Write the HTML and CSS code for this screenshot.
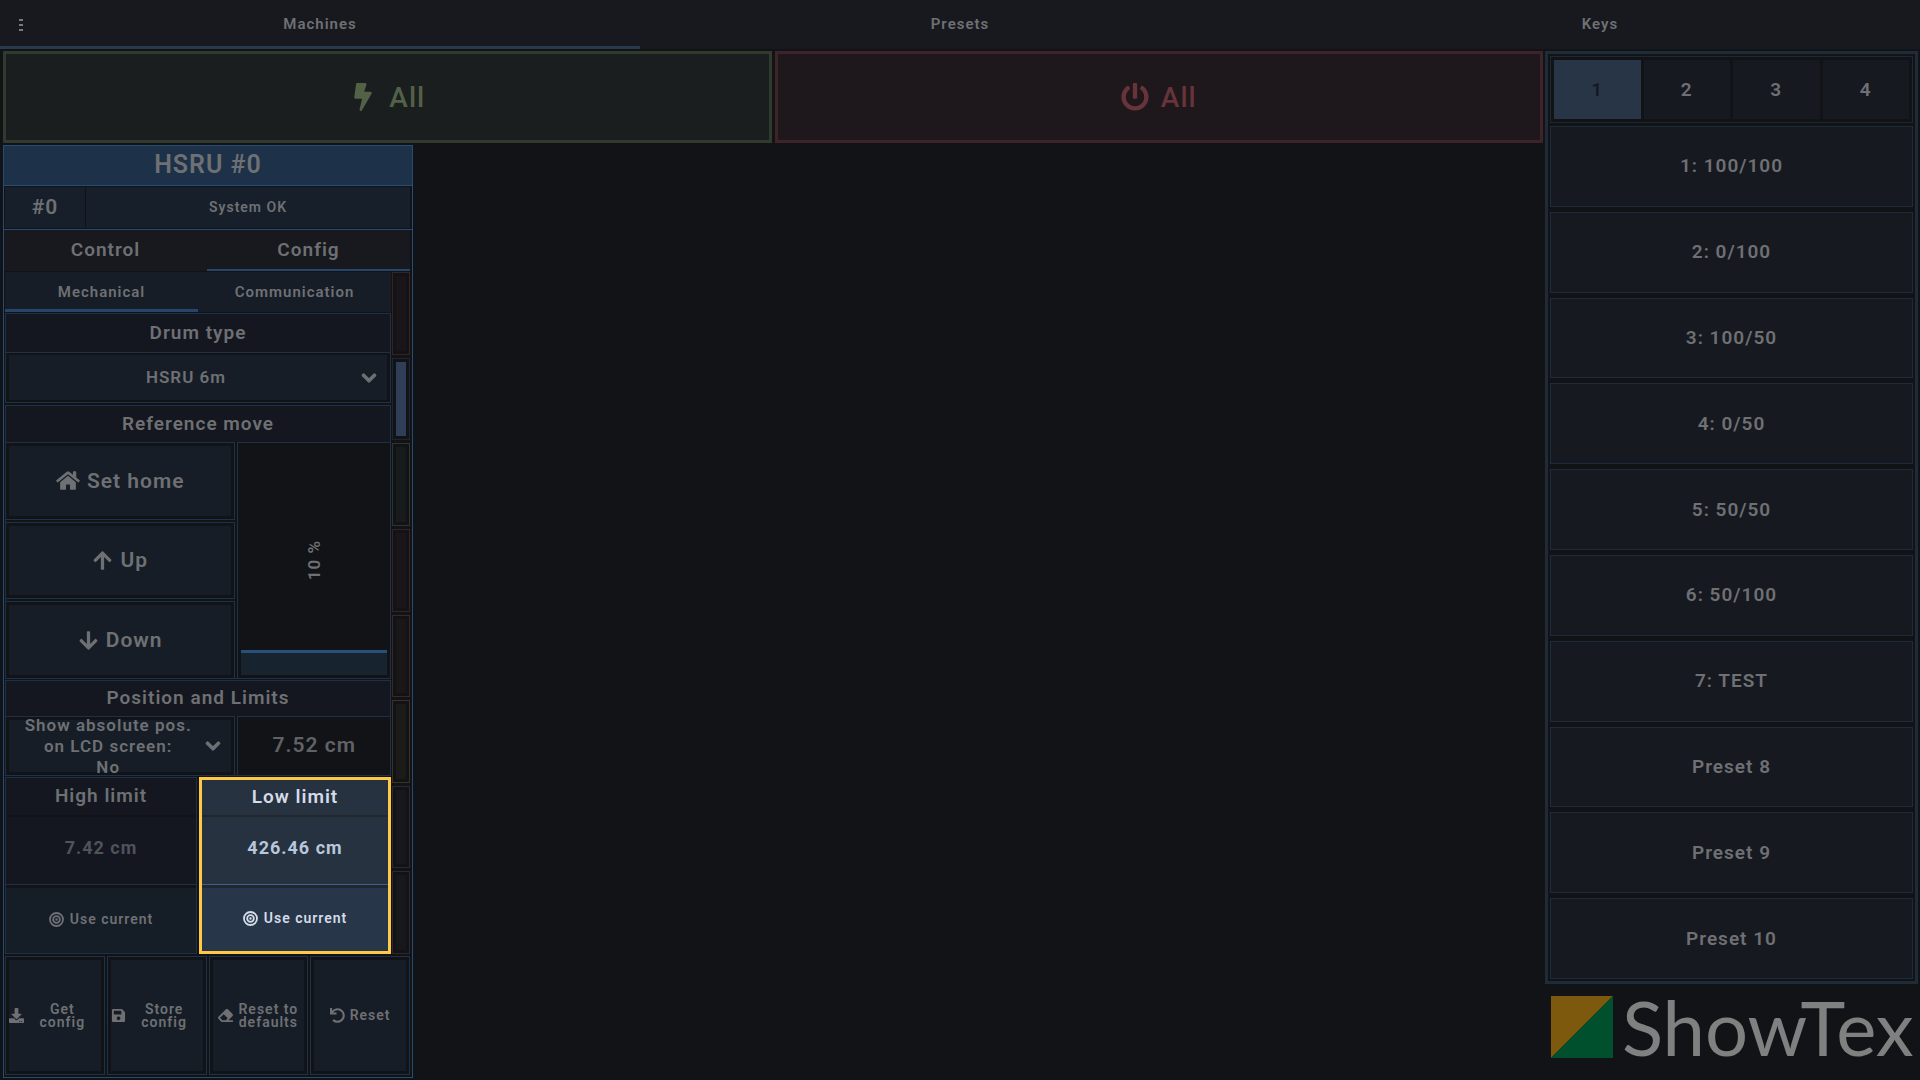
FILE: index.html
```html
<!DOCTYPE html>
<html lang="en">
<head>
    <meta charset="UTF-8">
    <meta name="viewport" content="width=device-width, initial-scale=1.0">
    <title>ShowTex - Machines</title>
    <link rel="stylesheet" href="styles.css">
</head>
<body>
    <!-- Icon set -->
    <svg class="icon-set" aria-hidden="true">
        <symbol id="bolt" viewBox="0 0 320 512"><path d="M296 160H180.6l42.6-129.8C227.2 15 215.7 0 200 0H56C44 0 33.8 8.9 32.2 20.8l-32 240C-1.7 275.2 9.5 288 24 288h118.7L96.6 482.5c-3.6 15.2 8 29.5 23.3 29.5 8.4 0 16.4-4.4 20.8-12l176-304c9.3-15.9-2.2-36-20.7-36z"/></symbol>
        <symbol id="power" viewBox="0 0 512 512"><path d="M400 54.1c63 45 104 118.6 104 201.9 0 136.8-110.8 247.7-247.5 248C120 504.3 8.2 393 8 256.4 7.9 173.1 48.9 99.3 111.8 54.2c11.7-8.3 28-4.8 35 7.7L162.6 90c5.9 10.5 3.1 23.8-6.6 31-41.5 30.8-68 79.6-68 134.9-.1 92.3 74.5 168.1 168 168.1 91.6 0 168.6-74.2 168-169.1-.3-51.8-24.7-101.8-68.1-134-9.7-7.2-12.4-20.5-6.5-30.9l15.8-28.1c7-12.4 23.2-16.1 34.8-7.8zM296 264V24c0-13.3-10.7-24-24-24h-32c-13.3 0-24 10.7-24 24v240c0 13.3 10.7 24 24 24h32c13.3 0 24-10.7 24-24z"/></symbol>
        <symbol id="home" viewBox="0 0 576 512"><path d="M280.37 148.26L96 300.11V464a16 16 0 0 0 16 16l112.06-.29a16 16 0 0 0 15.92-16V368a16 16 0 0 1 16-16h64a16 16 0 0 1 16 16v95.64a16 16 0 0 0 16 16.05L464 480a16 16 0 0 0 16-16V300L295.67 148.26a12.19 12.19 0 0 0-15.3 0zM571.6 251.47L488 182.56V44.05a12 12 0 0 0-12-12h-56a12 12 0 0 0-12 12v72.61L318.47 43a48 48 0 0 0-61 0L4.34 251.47a12 12 0 0 0-1.6 16.9l25.5 31A12 12 0 0 0 45.15 301l235.22-193.74a12.19 12.19 0 0 1 15.3 0L530.9 301a12 12 0 0 0 16.9-1.6l25.5-31a12 12 0 0 0-1.7-16.93z"/></symbol>
        <symbol id="arrow-up" viewBox="0 0 448 512"><path d="M34.9 289.5l-22.2-22.2c-9.4-9.4-9.4-24.6 0-33.9L207 39c9.4-9.4 24.6-9.4 33.9 0l194.3 194.3c9.4 9.4 9.4 24.6 0 33.9L413 289.4c-9.5 9.5-25 9.3-34.3-.4L264 168.6V456c0 13.3-10.7 24-24 24h-32c-13.3 0-24-10.7-24-24V168.6L69.2 289.1c-9.3 9.8-24.8 10-34.3.4z"/></symbol>
        <symbol id="arrow-down" viewBox="0 0 448 512"><path d="M413.1 222.5l22.2 22.2c9.4 9.4 9.4 24.6 0 33.9L241 473c-9.4 9.4-24.6 9.4-33.9 0L12.7 278.6c-9.4-9.4-9.4-24.6 0-33.9l22.2-22.2c9.5-9.5 25-9.3 34.3.4L184 343.4V56c0-13.3 10.7-24 24-24h32c13.3 0 24 10.7 24 24v287.4l114.8-120.5c9.3-9.8 24.8-10 34.3-.4z"/></symbol>
        <symbol id="download" viewBox="0 0 512 512"><path d="M216 0h80c13.3 0 24 10.7 24 24v168h87.7c17.8 0 26.7 21.5 14.1 34.1L269.7 378.3c-7.5 7.5-19.8 7.5-27.3 0L90.1 226.1c-12.6-12.6-3.7-34.1 14.1-34.1H192V24c0-13.3 10.7-24 24-24zm296 376v112c0 13.3-10.7 24-24 24H24c-13.3 0-24-10.7-24-24V376c0-13.3 10.7-24 24-24h146.7l49 49c20.1 20.1 52.5 20.1 72.6 0l49-49H488c13.3 0 24 10.7 24 24zm-124 88c0-11-9-20-20-20s-20 9-20 20 9 20 20 20 20-9 20-20zm64 0c0-11-9-20-20-20s-20 9-20 20 9 20 20 20 20-9 20-20z"/></symbol>
        <symbol id="save" viewBox="0 0 448 512"><path d="M433.941 129.941l-83.882-83.882A48 48 0 0 0 316.118 32H48C21.49 32 0 53.49 0 80v352c0 26.51 21.49 48 48 48h352c26.51 0 48-21.49 48-48V163.882a48 48 0 0 0-14.059-33.941zM224 416c-35.346 0-64-28.654-64-64 0-35.346 28.654-64 64-64s64 28.654 64 64c0 35.346-28.654 64-64 64zm96-304.52V212c0 6.627-5.373 12-12 12H76c-6.627 0-12-5.373-12-12V108c0-6.627 5.373-12 12-12h228.52c3.183 0 6.235 1.264 8.485 3.515l3.48 3.48A11.996 11.996 0 0 1 320 111.48z"/></symbol>
        <symbol id="eraser" viewBox="0 0 512 512"><path d="M497.941 273.941c18.745-18.745 18.745-49.137 0-67.882l-160-160c-18.745-18.745-49.136-18.746-67.883 0l-256 256c-18.745 18.745-18.745 49.137 0 67.882l96 96A48.004 48.004 0 0 0 144 480h356c6.627 0 12-5.373 12-12v-40c0-6.627-5.373-12-12-12H355.883l142.058-142.059zm-302.627-62.627l137.373 137.373L265.373 416H150.628l-80-80 124.686-124.686z"/></symbol>
        <symbol id="undo" viewBox="0 0 512 512"><path d="M212.333 224.333H12c-6.627 0-12-5.373-12-12V12C0 5.373 5.373 0 12 0h48c6.627 0 12 5.373 12 12v78.112C117.773 39.279 184.26 7.47 258.175 8.007c136.906.994 246.448 111.623 246.157 248.532C504.041 393.258 393.12 504 256.333 504c-64.089 0-122.496-24.313-166.51-64.215-5.099-4.622-5.334-12.554-.467-17.42l33.967-33.967c4.474-4.474 11.662-4.717 16.401-.525C170.76 415.336 211.58 432 256.333 432c97.268 0 176-78.716 176-176 0-97.267-78.716-176-176-176-58.496 0-110.28 28.476-142.274 72.333h98.274c6.627 0 12 5.373 12 12v48c0 6.627-5.373 12-12 12z"/></symbol>
        <symbol id="bullseye" viewBox="0 0 512 512"><g fill="none" stroke="currentColor" stroke-width="62"><circle cx="256" cy="256" r="222"/><circle cx="256" cy="256" r="114"/></g><circle cx="256" cy="256" r="40"/></symbol>
        <symbol id="chevron" viewBox="0 0 448 512"><path stroke="currentColor" stroke-width="36" d="M207.029 381.476L12.686 187.132c-9.373-9.373-9.373-24.569 0-33.941l22.667-22.667c9.357-9.357 24.522-9.375 33.901-.04L224 284.505l154.745-154.021c9.379-9.335 24.544-9.317 33.901.04l22.667 22.667c9.373 9.373 9.373 24.569 0 33.941L240.971 381.476c-9.373 9.372-24.569 9.372-33.942 0z"/></symbol>
    </svg>

    <header class="topbar">
        <button class="menu-button" aria-label="Menu"><i></i><i></i><i></i></button>
        <nav class="main-tabs">
            <a href="#machines" class="active">Machines</a>
            <a href="#presets">Presets</a>
            <a href="#keys">Keys</a>
        </nav>
    </header>

    <main>
        <section class="machines">
            <div class="all-buttons">
                <button class="enable"><svg class="icon"><use href="#bolt"/></svg>All</button>
                <button class="disable"><svg class="icon"><use href="#power"/></svg>All</button>
            </div>

            <article class="machine">
                <h1>HSRU #0</h1>
                <div class="status">
                    <span class="number">#0</span>
                    <span class="state">System OK</span>
                </div>
                <nav class="machine-tabs">
                    <a href="#control">Control</a>
                    <a href="#config" class="active">Config</a>
                </nav>

                <div class="machine-body">
                    <div class="config">
                        <nav class="config-tabs">
                            <a href="#mechanical" class="active">Mechanical</a>
                            <a href="#communication">Communication</a>
                        </nav>

                        <section class="group drum">
                            <h2><label for="drum">Drum type</label></h2>
                            <div class="cell">
                                <div class="dropdown">
                                    <select id="drum"><option>HSRU 6m</option></select>
                                    <svg class="icon chevron"><use href="#chevron"/></svg>
                                </div>
                            </div>
                        </section>

                        <section class="group reference">
                            <h2>Reference move</h2>
                            <div class="move">
                                <div class="move-buttons">
                                    <button><svg class="icon wide"><use href="#home"/></svg>Set home</button>
                                    <button><svg class="icon"><use href="#arrow-up"/></svg>Up</button>
                                    <button><svg class="icon"><use href="#arrow-down"/></svg>Down</button>
                                </div>
                                <div class="speed">
                                    <div class="speed-fill" style="height: 11%"></div>
                                    <label for="speed">10 %</label>
                                    <input type="range" id="speed" min="0" max="100" value="10">
                                </div>
                            </div>
                        </section>

                        <section class="group position">
                            <h2>Position and Limits</h2>
                            <div class="position-row">
                                <div class="cell">
                                    <div class="dropdown">
                                        <label for="lcd">Show absolute pos.<br>on LCD screen:</label>
                                        <select id="lcd"><option>No</option><option>Yes</option></select>
                                        <svg class="icon chevron"><use href="#chevron"/></svg>
                                    </div>
                                </div>
                                <output class="current">7.52 cm</output>
                            </div>
                        </section>

                        <div class="limits">
                            <section class="limit">
                                <h2><label for="high">High limit</label></h2>
                                <input type="text" id="high" value="7.42 cm">
                                <button><svg class="icon"><use href="#bullseye"/></svg>Use current</button>
                            </section>
                            <section class="limit selected">
                                <h2><label for="low">Low limit</label></h2>
                                <input type="text" id="low" value="426.46 cm">
                                <button><svg class="icon"><use href="#bullseye"/></svg>Use current</button>
                            </section>
                        </div>
                    </div>

                    <div class="indicators">
                        <div class="red"></div>
                        <div class="blue"></div>
                        <div class="green"></div>
                        <div class="red"></div>
                        <div class="orange"></div>
                        <div class="yellow"></div>
                        <div></div>
                        <div></div>
                    </div>
                </div>

                <div class="config-actions">
                    <button><svg class="icon"><use href="#download"/></svg><span>Get<br>config</span></button>
                    <button><svg class="icon"><use href="#save"/></svg><span>Store<br>config</span></button>
                    <button class="centered"><svg class="icon"><use href="#eraser"/></svg><span>Reset to<br>defaults</span></button>
                    <button class="centered"><svg class="icon"><use href="#undo"/></svg><span>Reset</span></button>
                </div>
            </article>
        </section>

        <aside class="side">
            <div class="presets">
                <div class="pages">
                    <button class="active">1</button>
                    <button>2</button>
                    <button>3</button>
                    <button>4</button>
                </div>
                <button class="preset">1: 100/100</button>
                <button class="preset">2: 0/100</button>
                <button class="preset">3: 100/50</button>
                <button class="preset">4: 0/50</button>
                <button class="preset">5: 50/50</button>
                <button class="preset">6: 50/100</button>
                <button class="preset">7: TEST</button>
                <button class="preset">Preset 8</button>
                <button class="preset">Preset 9</button>
                <button class="preset">Preset 10</button>
            </div>
            <div class="logo">
                <svg class="logo-mark" viewBox="0 0 62 62" aria-hidden="true">
                    <path d="M0 0h62L0 62z" fill="#7d590d"/>
                    <path d="M62 0v62H0z" fill="#00502d"/>
                </svg>
                <span>ShowTex</span>
            </div>
        </aside>
    </main>
</body>
</html>
```

FILE: styles.css
```css
* {
    box-sizing: border-box;
}

body {
    margin: 0;
    min-height: 100vh;
    display: flex;
    flex-direction: column;
    background-color: #111316;
    color: #6e7074;
    font-family: Roboto, sans-serif;
    font-size: 19px;
    font-weight: 600;
    letter-spacing: 1px;
}

button, input, select {
    margin: 0;
    padding: 0;
    border: none;
    background: none;
    color: inherit;
    font: inherit;
    letter-spacing: inherit;
    cursor: pointer;
}

button {
    display: flex;
    align-items: center;
    justify-content: center;
}

a {
    color: inherit;
    text-decoration: none;
    display: flex;
    align-items: center;
    justify-content: center;
}

h1, h2 {
    margin: 0;
    font-weight: 600;
    display: flex;
    align-items: center;
    justify-content: center;
}

.icon-set {
    display: none;
}

.icon {
    width: 1em;
    height: 1em;
    flex: none;
    fill: currentColor;
}

.icon.wide {
    width: 24px;
}

/* Top bar */
.topbar {
    position: relative;
    background-color: #17191e;
}

.menu-button {
    position: absolute;
    left: 12px;
    top: 12px;
    width: 18px;
    height: 26px;
    flex-direction: column;
    gap: 3px;
}

.menu-button i {
    width: 4px;
    height: 2px;
    background-color: #77797d;
}

.main-tabs {
    display: grid;
    grid-template-columns: repeat(3, 1fr);
    height: 49px;
    font-size: 15px;
}

.main-tabs a {
    padding-top: 2px;
    border-bottom: 3px solid transparent;
}

.main-tabs .active {
    border-color: #2b394d;
}

/* Page columns */
main {
    flex: 1;
    display: grid;
    grid-template-columns: minmax(0, 1fr) 373px;
    gap: 2px;
    padding: 2px 2px 2px 3px;
}

.machines {
    display: flex;
    flex-direction: column;
    gap: 2px;
}

.all-buttons {
    display: grid;
    grid-template-columns: 1fr 1fr;
    gap: 3px;
    height: 92px;
    font-size: 28px;
    font-weight: 500;
}

.all-buttons button {
    gap: 12px;
    border: 3px solid;
}

.all-buttons .enable {
    background-color: #1a1e1f;
    border-color: #313a2e;
    color: #536146;
}

.all-buttons .disable {
    background-color: #1e171b;
    border-color: #3e2429;
    color: #66343a;
}

/* Machine card */
.machine {
    flex: 1;
    width: 410px;
    display: flex;
    flex-direction: column;
    border: 1px solid #264c74;
}

.machine h1 {
    height: 40px;
    padding-bottom: 2px;
    background-color: #1d3148;
    border-bottom: 1px solid #264c74;
    font-size: 25px;
}

.status {
    display: grid;
    grid-template-columns: 80px 1fr;
    gap: 1px;
    height: 44px;
    padding: 1px 2px 1px 1px;
    border-bottom: 1px solid #264c74;
}

.status span {
    display: flex;
    align-items: center;
    justify-content: center;
    padding-bottom: 2px;
    background-color: #17202a;
    font-size: 21px;
}

.status .state {
    font-size: 14px;
}

.machine-tabs {
    display: grid;
    grid-template-columns: 1fr 1fr;
    height: 41px;
    padding-right: 2px;
}

.machine-tabs a {
    background-color: #17191e;
    border-bottom: 2px solid #17191e;
}

.machine-tabs .active {
    border-color: #24466a;
}

.machine-body {
    flex: 1;
    display: grid;
    grid-template-columns: 1fr 18px;
    gap: 1px;
    padding: 1px 2px 2px 1px;
}

.config {
    display: flex;
    flex-direction: column;
    gap: 1px;
}

.config-tabs {
    display: grid;
    grid-template-columns: 1fr 1fr;
    height: 40px;
    background-color: #161d26;
    font-size: 15px;
}

.config-tabs a {
    padding-top: 2px;
    border-bottom: 3px solid transparent;
}

.config-tabs .active {
    border-color: #24466a;
}

/* Config groups */
.group {
    border: 1px solid #1d3248;
}

.group h2 {
    height: 36px;
    padding-bottom: 2px;
    background-color: #14171f;
    font-size: 19px;
}

.cell {
    display: flex;
    padding: 3px;
}

.dropdown {
    flex: 1;
    position: relative;
    display: flex;
    flex-direction: column;
    justify-content: center;
    background-color: #161d26;
    font-size: 17px;
    line-height: 21px;
    text-align: center;
}

.dropdown select {
    appearance: none;
    width: 100%;
    padding-right: 24px;
    text-align-last: center;
}

.dropdown label {
    padding-right: 24px;
}

.dropdown .chevron {
    position: absolute;
    right: 10px;
    top: calc(50% - 8px);
    width: 16px;
    height: 16px;
    pointer-events: none;
}

.drum {
    margin-bottom: 1px;
}

.drum h2 {
    height: 39px;
    border-bottom: 1px solid #1d3248;
}

.drum .cell {
    padding: 2px 3px;
}

.drum .dropdown {
    height: 45px;
}

.reference {
    flex: 1;
    display: flex;
    flex-direction: column;
}

.move {
    flex: 1;
    display: grid;
    grid-template-columns: 3fr 2fr;
    gap: 2px;
    margin: 0 -1px -1px;
}

.move-buttons {
    display: grid;
    grid-template-rows: repeat(3, 1fr);
    gap: 2px;
    font-size: 21px;
}

.move-buttons button,
.config-actions button {
    padding: 3px;
    border: 1px solid #1d3248;
    background-color: #161d26;
    background-clip: content-box;
    gap: 7px;
}

.speed {
    position: relative;
    display: flex;
    flex-direction: column;
    justify-content: flex-end;
    padding: 3px;
    border: 1px solid #1d3248;
    font-size: 17px;
}

.speed-fill {
    background-color: #182330;
    border-top: 3px solid #285078;
}

.speed label {
    position: absolute;
    inset: 0;
    display: flex;
    align-items: center;
    justify-content: center;
    writing-mode: sideways-lr;
}

.speed input {
    position: absolute;
    inset: 0;
    width: 100%;
    height: 100%;
    writing-mode: vertical-lr;
    direction: rtl;
    opacity: 0;
}

.position {
    height: 96px;
    display: flex;
    flex-direction: column;
}

.position-row {
    flex: 1;
    display: grid;
    grid-template-columns: 3fr 2fr;
    gap: 2px;
    margin: 0 -1px -1px;
}

.position-row > * {
    border: 1px solid #1d3248;
}

.position-row .dropdown {
    height: 52px;
}

.current {
    display: flex;
    align-items: center;
    justify-content: center;
    padding-bottom: 2px;
    font-size: 21px;
    color: #606266;
}

/* Limits */
.limits {
    display: grid;
    grid-template-columns: 1fr 1fr;
    gap: 2px;
    height: 177px;
}

.limit {
    display: grid;
    grid-template-rows: 39px 68px 1fr;
    min-width: 0;
    border: 1px solid #1d3248;
    background-color: #14171f;
}

.limit h2 {
    padding-bottom: 3px;
    border-bottom: 2px solid #111316;
    font-size: 19px;
}

.limit input {
    width: 100%;
    padding-bottom: 6px;
    border-bottom: 1px solid #1d3248;
    color: #4f535b;
    font-weight: 700;
    font-size: 18px;
    text-align: center;
}

.limit button {
    gap: 6px;
    padding-bottom: 3px;
    border-top: 3px solid #111316;
    background-color: #151d26;
    font-size: 14px;
}

.limit.selected {
    grid-template-rows: 37px 68px 1fr;
    border: 3px solid #ffc845;
    background-color: #26323f;
    color: #d5dbe8;
}

.limit.selected h2 {
    border-color: #22272e;
}

.limit.selected input {
    border-color: #34639a;
    color: #b9c6dc;
}

.limit.selected button {
    border-color: #22272e;
    background-color: #273749;
}

/* Indicator column */
.indicators {
    display: flex;
    flex-direction: column;
    gap: 3px;
}

.indicators div {
    flex: 1;
    padding: 3px;
    border: 1px solid #2d272e;
    background-color: #18171c;
    background-clip: content-box;
}

.indicators .red {
    border-color: #3b2024;
    background-color: #191518;
}

.indicators .blue {
    border-color: #1f252e;
    background-color: #303f57;
}

.indicators .green {
    border-color: #30342d;
    background-color: #171b1b;
}

.indicators .orange {
    border-color: #3c2723;
    background-color: #1a1718;
}

.indicators .yellow {
    border-color: #3a3227;
    background-color: #1b1b1a;
}

.config-actions {
    display: grid;
    grid-template-columns: repeat(4, 1fr);
    gap: 2px;
    height: 121px;
    padding: 0 2px 2px 1px;
    font-size: 14px;
    line-height: 13px;
}

.config-actions button {
    gap: 0;
}

.config-actions .icon,
.limit .icon {
    width: 15px;
    height: 15px;
}

.config-actions span {
    flex: 1;
}

.config-actions .centered {
    gap: 5px;
}

.config-actions .centered span {
    flex: none;
}

/* Preset keys */
.side {
    display: flex;
    flex-direction: column;
}

.presets {
    flex: 1;
    display: flex;
    flex-direction: column;
    gap: 5px;
    padding: 2px;
    border: 3px solid #202b38;
}

.pages {
    display: grid;
    grid-template-columns: repeat(4, 1fr);
    gap: 3px;
    height: 67px;
    margin-bottom: -2px;
    padding: 3px;
    border: 1px solid #1e2833;
}

.pages button {
    background-color: #16191f;
}

.pages .active {
    background-color: #283547;
    color: #15191f;
}

.preset {
    flex: 1;
    padding-bottom: 1px;
    border: 1px solid #1e2b38;
    background-color: #16191f;
}

.logo {
    display: flex;
    align-items: center;
    gap: 9px;
    height: 94px;
    padding: 0 4px 8px 6px;
    color: #808080;
    font-family: Lato, sans-serif;
    font-size: 76px;
    font-weight: 400;
    letter-spacing: normal;
    line-height: 76px;
}

.logo-mark {
    width: 62px;
    height: 62px;
    flex: none;
}
```
